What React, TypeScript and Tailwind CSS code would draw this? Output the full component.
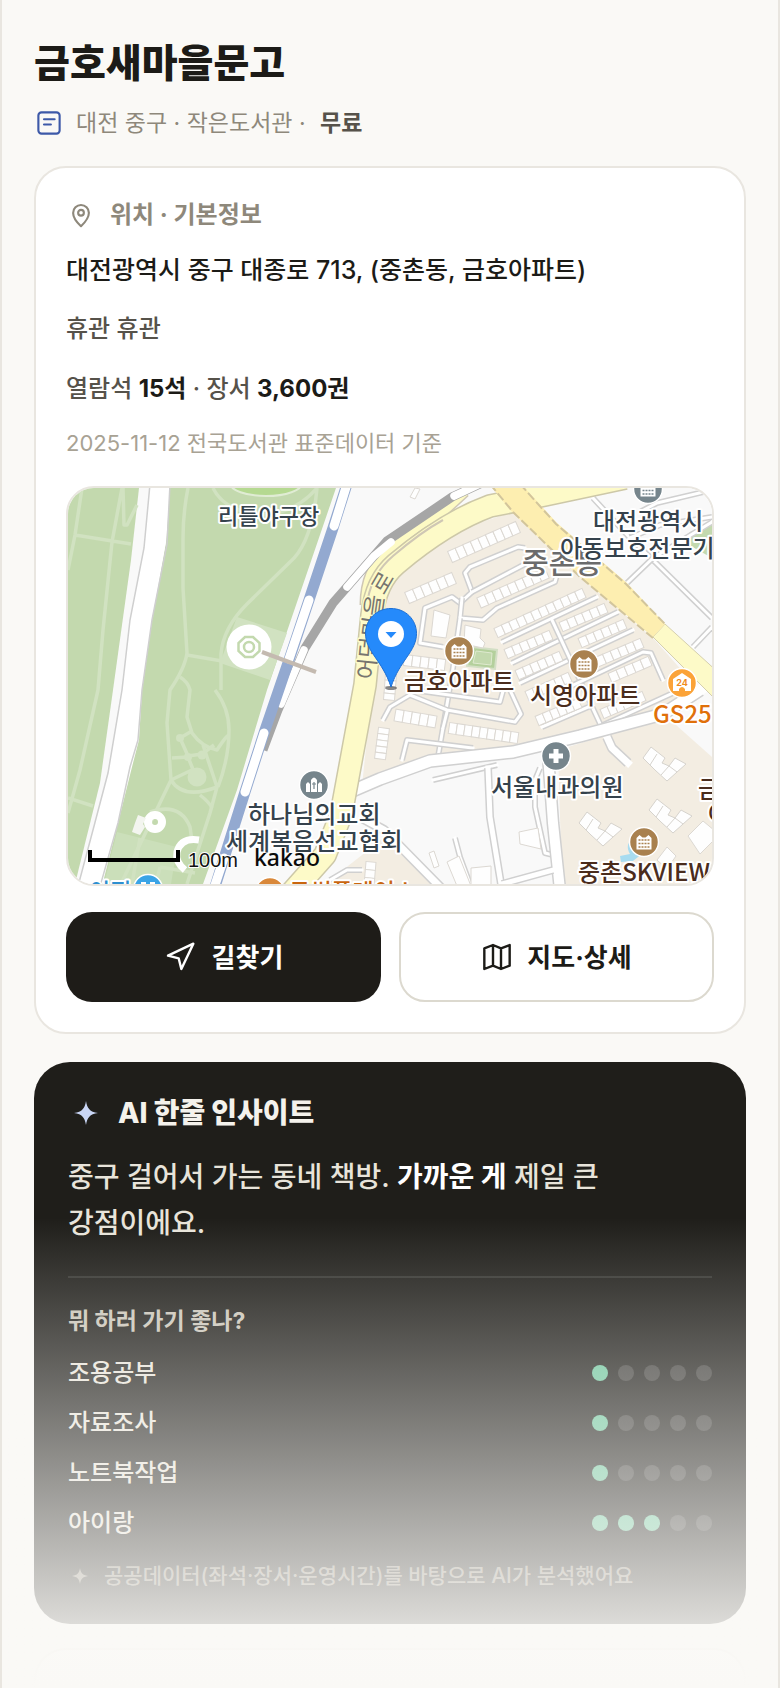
import type { ReactNode } from 'react';

const ratings = [
  { label: '조용공부', score: 1 },
  { label: '자료조사', score: 1 },
  { label: '노트북작업', score: 1 },
  { label: '아이랑', score: 3 },
];

const Sparkle = ({ className = '' }: { className?: string }) => (
  <svg viewBox="0 0 24 24" fill="currentColor" className={className} aria-hidden="true">
    <path d="M12 4c.9 5.1 2.400 7.100 8 8-5.600.9-7.100 2.900-8 8-.9-5.100-2.400-7.100-8-8 5.600-.9 7.100-2.900 8-8z" />
  </svg>
);

/* ---------- Map pieces ---------- */

const Road = ({ points, w = 3 }: { points: string; w?: number }) => (
  <g fill="none" strokeLinejoin="round">
    <polyline points={points} stroke="#d0d0d0" strokeWidth={w + 3} />
    <polyline points={points} stroke="#ffffff" strokeWidth={w} strokeLinecap="square" />
  </g>
);

type RowProps = { x1: number; y1: number; x2: number; y2: number; n: number; d?: number };

// A terrace of n equal blocks between two points
const Blocks = ({ x1, y1, x2, y2, n, d = 10 }: RowProps) => {
  const length = Math.hypot(x2 - x1, y2 - y1);
  const angle = (Math.atan2(y2 - y1, x2 - x1) * 180) / Math.PI;
  const step = length / n;
  return (
    <g transform={`translate(${x1} ${y1}) rotate(${angle})`} fill="#fefefe" stroke="#dcd8d2">
      {Array.from({ length: n }, (_, i) => (
        <rect key={i} x={i * step} y={-d / 2} width={step} height={d} />
      ))}
    </g>
  );
};

const blockRows: RowProps[] = [
  { x1: 450, y1: 557, x2: 518, y2: 527, n: 9, d: 12 },
  { x1: 407, y1: 598, x2: 454, y2: 578, n: 6, d: 12 },
  { x1: 479, y1: 603, x2: 547, y2: 573, n: 9, d: 11 },
  { x1: 496, y1: 633, x2: 584, y2: 593, n: 12 },
  { x1: 561, y1: 627, x2: 606, y2: 608, n: 6 },
  { x1: 506, y1: 654, x2: 551, y2: 635, n: 6 },
  { x1: 580, y1: 643, x2: 625, y2: 624, n: 6 },
  { x1: 517, y1: 675, x2: 561, y2: 656, n: 6 },
  { x1: 597, y1: 662, x2: 642, y2: 643, n: 6 },
  { x1: 527, y1: 696, x2: 570, y2: 677, n: 6 },
  { x1: 610, y1: 678, x2: 650, y2: 661, n: 5 },
  { x1: 395, y1: 715, x2: 436, y2: 722, n: 5, d: 12 },
  { x1: 449, y1: 728, x2: 518, y2: 738, n: 9, d: 11 },
  { x1: 537, y1: 721, x2: 580, y2: 703, n: 6 },
  { x1: 602, y1: 714, x2: 644, y2: 696, n: 6 },
  { x1: 404, y1: 660, x2: 445, y2: 665, n: 5, d: 11 },
  { x1: 384, y1: 728, x2: 380, y2: 759, n: 5, d: 11 },
  { x1: 391, y1: 674, x2: 389, y2: 700, n: 4, d: 11 },
  { x1: 371, y1: 862, x2: 369, y2: 886, n: 3, d: 10 },
];

const lanes = [
  '525,548 518,547 470,567 465,573 472,592 460,603 452,597 425,608 420,643 443,647',
  '472,592 527,563',
  '462,598 460,618 483,620 497,608 555,582 557,575',
  '460,618 452,675 438,757',
  '502,642 597,597',
  '512,663 618,612',
  '520,683 633,630',
  '552,620 602,728',
  '567,688 643,652 651,653 663,680',
  '383,720 390,707 410,695 447,710 515,722 521,714 510,690',
  '413,690 500,702 505,684',
  '447,712 443,728',
  '402,760 407,740 473,748',
  '542,727 593,705',
  '603,725 673,693',
  '433,780 497,765',
  '540,768 535,780 535,807 545,853 553,855',
  '455,838 460,857 470,884',
  '593,498 630,538 653,560 712,618',
  '627,583 653,558 712,522',
  '630,538 660,525 712,517',
  '640,512 657,503 712,490',
  '693,647 712,627',
  '330,880 347,870 362,870',
];

const Estate = ({ x, y }: { x: number; y: number }) => (
  <path
    transform={`translate(${x} ${y})`}
    d="M-21-6-13-17 1-6-2-1 5 2 11-6 22 0 3 17-9 6zM-14 1-7-10M-3 11 5 2 13 8"
    fill="#fefefe"
    stroke="#d6d3cd"
  />
);

const Badge = ({ x, y, color, children }: { x: number; y: number; color: string; children?: ReactNode }) => (
  <g transform={`translate(${x} ${y})`}>
    <circle r="14.500" fill={color} stroke="#fff" strokeWidth="1.500" />
    {children}
  </g>
);

const Apartment = ({ hole }: { hole: string }) => (
  <>
    <path d="M-7.500 7.500v-11.500l3-3 3 2.500h3l3-2.500 3 3v11.500z" fill="#fff" />
    <path
      d="M-5.500-2h2m1 0h2m1 0h2m1 0h2M-5.500 1.500h2m1 0h2m1 0h2m1 0h2M-5.500 5h2m1 0h2m1 0h2m1 0h2"
      stroke={hole}
      strokeWidth="1.500"
    />
  </>
);

const LocationMap = () => (
  <svg
    viewBox="68 488 644 396"
    preserveAspectRatio="xMidYMid slice"
    className="block size-full"
    role="img"
    aria-label="금호새마을문고 주변 지도"
  >
    <rect x="68" y="488" width="644" height="396" fill="#f9f9f9" />

    {/* Riverside park */}
    <path d="M68 488h71l-8 72-18 130-13 93-25 101H68z" fill="#c3d9ae" />
    <path d="M170 488h166L267 690l-30 100-34 94H100l18-61 12-56 8-27 4-50 10-70 14-78z" fill="#c3d9ae" />
    <path d="M237 617l50 16-17 47-50-17z" fill="#d1e2c1" />
    <path d="M117 832l60 15-6 37H104z" fill="#cbdfba" />
    <g fill="none" stroke="#d1e2c1" strokeWidth="3.500" strokeLinejoin="round">
      <path d="M82 488l-7 47-7 35M75 535l56 9M122 488l-10 54-9 88-5 60-18 80-12 43M123 488l1 37h3l10-20M68 798l25 8" />
      <path d="M188 488q-5 25-5 50v50l4 65q-2 15-17 37l-3 33 4 57-53 110" />
      <path d="M317 488q-5 55-27 74l-43 42q-24 24-26 50v36M213 488q12 25 54 27 32-5 50-27" />
      <path d="M187 655l35 6M180 677q8 5 10 13l-3 27 5 16q10 14 25 17 9-14 12-15M215 690q14 18 14 40 0 28-11 57M171 780q12 20 46 7M171 780l23-11M203 745l14 42-7 26-23 71" />
      <path d="M180 738l12-7M180 738l8 18 14-2 12-9M172 758l16-1M188 757l6 15M200 795q10 8 12 13M150 812q30-10 40 15l2 14" />
      <path d="M140 838l-8 46M160 867l35 6M160 867l-4 17" />
    </g>
    <g fill="#d1e2c1">
      <circle cx="197" cy="777" r="9.500" />
      <circle cx="180" cy="738" r="4" />
      <circle cx="202" cy="755" r="4.500" />
      <circle cx="188" cy="757" r="4" />
    </g>
    <ellipse cx="266" cy="483" rx="36" ry="13" fill="#b5d991" stroke="#e0ecd4" strokeWidth="2" />

    {/* Riverside road */}
    <path
      d="M150 488l-6 60-14 72-8 70-14 83-15 57-16 60h24l17-67 14-56 7-27 3-50 10-70 14-78 4-54z"
      fill="#fff"
    />
    <path d="M150 484l-6 64-14 72-8 70-14 83-15 57-16 60" fill="none" stroke="#cfcfcf" strokeWidth="1.500" />
    <path d="M170 484l-3 60-15 76-10 70-4 50-8 27-12 56-19 67" fill="none" stroke="#cfcfcf" strokeWidth="1.500" />

    {/* Monument and pavilion */}
    <circle cx="249" cy="647" r="22.500" fill="#fff" />
    <path d="M245 637h8l6.500 6v8l-6.500 6h-8l-6.500-6v-8z" fill="none" stroke="#c3d9ae" strokeWidth="2.500" />
    <circle cx="249" cy="647" r="5" fill="none" stroke="#c3d9ae" strokeWidth="2.500" />
    <circle cx="155" cy="822" r="7" fill="none" stroke="#fff" strokeWidth="8" />
    <path d="M138 815l8 3-3 6 2 3-5 8-8-3 3-9z" fill="#f3f5ef" />
    <path d="M199 840q-18-3-22 12-2 10 8 18" fill="none" stroke="#fff" strokeWidth="7" />

    {/* Apartment ground */}
    <path d="M372 690l10-95 15-25 53-38 63-20 67 65 73 61 40 45-24 32-76 20-80 16-83 9-50 20-18 6z" fill="#f3ede2" />
    <path d="M558 750l109-33 45 40v127H562z" fill="#f3ede2" />
    <path d="M325 884l46-36 12-10 50 46z" fill="#f3ede2" />
    <path d="M690 532l22-8v34l-30-17z" fill="#c3d9ae" />
    <path d="M472 647l25 3-2 19-28-3z" fill="#b4d09c" stroke="#d3dfc5" strokeWidth="2" />
    <path d="M476 651l16 2-1 12-18-2z" fill="#c3d9ae" stroke="#dfeacf" />

    {lanes.map((points) => (
      <Road key={points} points={points} />
    ))}
    <Road points="488,768 490,817 502,890" w={5} />
    <Road points="548,755 553,823 560,890" w={10} />
    <Road points="502,884 553,870" w={5} />
    <Road points="362,818 384,830 443,890" w={7} />
    <Road points="607,737 612,748 628,763" w={7} />
    <Road points="352,791 380,779 430,761 513,752 580,736 663,714 700,690" w={11} />
    {blockRows.map((row) => (
      <Blocks key={`${row.x1}-${row.y1}`} {...row} />
    ))}
    <g fill="#fefefe" stroke="#dcd8d2">
      <path d="M434 610l16 5-4 23-15-2zM465 625l16 4-1 9 5 5-2 5-19-4z" />
      <path d="M519 832l19-4 3 21-21-5zM447 862l12-6 12 30h-14zM471 868l20-2v20h-20zM429 853l5-2 5 15-5 2z" />
      <path d="M688 836l15-15 12 10v8l-15 15zM657 860l10-13 9 9-9 13zM415 488l5 1-5 10-5-2z" />
    </g>
    <Estate x={664} y={764} />
    <Estate x={670} y={816} />
    <Estate x={600} y={829} />
    <path d="M634 838q-10 6-4 16l-10 2 1 6 12-1 10-8z" fill="#a8dcf0" />

    {/* Yellow roads */}
    <g fill="none" strokeLinejoin="round">
      <path d="M365 605q0-35 22-53 32-29 54-38l24-22" stroke="#cfc7b4" strokeWidth="11" />
      <path d="M365 605q0-35 22-53 32-29 54-38l24-22" stroke="#fdfac4" strokeWidth="8" />
      <path d="M285 900l40-45 16-40 24-130 7-70q4-34 24-51 50-42 94-58l55-11 80-17" stroke="#cdc8a8" strokeWidth="24" />
      <path d="M285 900l40-45 16-40 24-130 7-70q4-34 24-51 50-42 94-58l55-11 80-17" stroke="#fdfac8" strokeWidth="21" />
      <path d="M368 598q5-25 25-42 28-24 50-36" stroke="#cfc7b4" strokeWidth="2" />
    </g>
    <path d="M653 637l12-13 55 50v30z" fill="#fdfac8" stroke="#d5cfae" />
    <path d="M489 484h32l36 39 70 60 38 41-12 13-73-60-67-64z" fill="#fdeeb0" />
    <path d="M520 484l36 40 70 60 39 40M490 484l23 28 67 65 73 61" fill="none" stroke="#d2c59c" strokeWidth="2" strokeDasharray="9 3" />

    {/* Railways */}
    <path d="M480 484l-28 13-65 44-40 46-14 16-28 45-27 62-15 40" fill="none" stroke="#a6a6a6" strokeWidth="9" />
    <g fill="none" stroke="#fff" strokeWidth="7.500" strokeLinecap="round">
      <path d="M482 483l-28 13M391 542l-17 14-27 31M304 650l-23 54" />
    </g>
    <path d="M347 484l-14 44-23 69-21 63-25 73-20 62-30 95" fill="none" stroke="#93a9d0" strokeWidth="11" />
    <g fill="none" stroke="#fff" strokeWidth="9" strokeLinecap="round">
      <path d="M347 484l-13 42M309 600l-20 59M264 733l-19 59M224 858l-12 36" />
    </g>
    <path d="M262 652l54 20" stroke="#c4bab0" strokeWidth="4" />

    {/* Street name follows the bend */}
    <path id="street" d="M374 680l5-50 4-28q5-19 30-44" fill="none" />
    <g className="font-['Noto_Sans_CJK_KR',sans-serif]" stroke="#fff" strokeWidth="4" strokeLinejoin="round" paintOrder="stroke" fontWeight="500">
      <text fill="#77756f" fontSize="23" stroke="#fdfac8" strokeWidth="3" fontWeight="400">
        <textPath href="#street">어덕마을로</textPath>
      </text>
      <text x="522" y="574" fontSize="29" fill="#6b6b6b">중촌동</text>
      <text x="218" y="524" fontSize="22" fill="#35424c">리틀야구장</text>
      <text x="593" y="530" fontSize="24" fill="#35424c">대전광역시</text>
      <text x="560" y="557" fontSize="24" fill="#35424c">아동보호전문기관</text>
      <text x="404" y="690" fontSize="24" fill="#4a2c1c">금호아파트</text>
      <text x="530" y="704" fontSize="24" fill="#4a2c1c">시영아파트</text>
      <text x="653" y="723" fontSize="24" fill="#e0700a">GS25</text>
      <text x="491" y="796" fontSize="24" fill="#35424c">서울내과의원</text>
      <text x="578" y="881" fontSize="24" fill="#4a2c1c">중촌SKVIEW</text>
      <text x="248" y="823" fontSize="24" fill="#35424c">하나님의교회</text>
      <text x="226" y="850" fontSize="24" fill="#35424c">세계복음선교협회</text>
      <text x="698" y="798" fontSize="24" fill="#4a2c1c">금호</text>
      <text x="708" y="823" fontSize="24" fill="#4a2c1c">아파트</text>
      <text x="89" y="900" fontSize="23" fill="#2d8fd0">이진</text>
      <text x="289" y="900" fontSize="23" fill="#c9660f">투썸플레이스</text>
    </g>

    <Badge x={648} y={489} color="#76858c">
      <Apartment hole="#76858c" />
    </Badge>
    <Badge x={459} y={651} color="#a9814f">
      <Apartment hole="#a9814f" />
    </Badge>
    <Badge x={584} y={664} color="#a9814f">
      <Apartment hole="#a9814f" />
    </Badge>
    <Badge x={644} y={842} color="#a9814f">
      <Apartment hole="#a9814f" />
    </Badge>
    <Badge x={682} y={683} color="#fba338">
      <path d="M-9-4l9-6 9 6v12h-6v-2q-3-4-6 0v2h-6z" fill="#fff" />
      <text y="3" textAnchor="middle" fontSize="9" fontWeight="700" fill="#f08c1e" className="font-['Inter',sans-serif]">
        24
      </text>
    </Badge>
    <Badge x={556} y={756} color="#76858c">
      <path d="M0-7V7M-7 0H7" stroke="#fff" strokeWidth="5" />
    </Badge>
    <Badge x={314} y={785} color="#76858c">
      <path d="M-8 7v-8l2-2 2 2v8zM4 7v-8l2-2 2 2v8zM-3 7v-12q3-5 6 0v12z" fill="#fff" />
      <path d="M0-3v7M-2-1h4" stroke="#76858c" strokeWidth="1.200" />
    </Badge>
    <Badge x={148} y={889} color="#3ba4e6">
      <path d="M-4-6V6M4-6V6M-7-6h5M2-6h5" stroke="#fff" strokeWidth="2" />
    </Badge>
    <Badge x={270} y={892} color="#d9883a" />

    {/* Scale and provider mark */}
    <path d="M90 850v10h88v-10" fill="none" stroke="#000" strokeWidth="4" />
    <text x="188" y="867" fontSize="20" fill="#111" stroke="#fff" strokeWidth="2" paintOrder="stroke" className="font-['Liberation_Sans',sans-serif]">
      100m
    </text>
    <text x="254" y="866" fontSize="23" fontWeight="500" fill="#0a0a0a" className="font-['Noto_Sans',sans-serif]">
      kakao
    </text>

    {/* Library pin */}
    <ellipse cx="391" cy="688" rx="6" ry="2" fill="#555" opacity=".7" />
    <path
      d="M391 608.500c-14.500 0-25.500 11-25.500 25 0 18 17 27 25.500 53.500 8.500-26.500 25.500-35.500 25.500-53.500 0-14-11-25-25.500-25z"
      fill="#258afb"
      stroke="#1a6fd6"
    />
    <circle cx="391" cy="634" r="13" fill="#fff" />
    <path d="M385.500 632h11l-5.500 6z" fill="#258afb" />
  </svg>
);

const LocationCard = () => (
  <section className="mt-7 rounded-[32px] border-2 border-[#e9e6e0] bg-white p-[30px]">
    <h2 className="flex h-[34px] items-center gap-[14px] text-[24px] leading-[34px] font-bold text-[#8e887b]">
      <svg viewBox="0 0 24 24" fill="none" stroke="currentColor" strokeWidth="1.700" strokeLinejoin="round" className="size-[30px]" aria-hidden="true">
        <path d="M12 21s-6.300-6-6.300-10.700a6.300 6.300 0 0 1 12.600 0C18.300 15 12 21 12 21z" />
        <circle cx="12" cy="10.200" r="2.300" />
      </svg>
      위치 · 기본정보
    </h2>
    <p className="mt-5 text-[25px] leading-9 font-medium text-[#1c1b17]">대전광역시 중구 대종로 713, (중촌동, 금호아파트)</p>
    <p className="mt-6 text-[24px] leading-[34px] font-medium text-[#56524a]">휴관 휴관</p>
    <p className="mt-[26px] text-[24px] leading-[34px] font-medium text-[#56524a]">
      열람석 <strong className="font-bold text-[#1c1b17]">15석</strong> · 장서{' '}
      <strong className="font-bold text-[#1c1b17]">3,600권</strong>
    </p>
    <p className="mt-[22px] text-[22px] leading-[30px] text-[#a8a294]">2025-11-12 전국도서관 표준데이터 기준</p>

    <div className="mt-7 h-[400px] overflow-hidden rounded-[28px] border-2 border-[#e9e6e0]">
      <LocationMap />
    </div>

    <div className="mt-[26px] grid grid-cols-2 gap-[18px] text-[26px] font-bold">
      <button type="button" className="flex h-[90px] items-center justify-center gap-4 rounded-[26px] bg-[#1e1c18] text-white">
        <svg viewBox="0 0 24 24" fill="none" stroke="currentColor" strokeWidth="1.800" strokeLinejoin="round" className="size-8" aria-hidden="true">
          <path d="M3 11 22 2l-9 19-2-8z" />
        </svg>
        길찾기
      </button>
      <button type="button" className="flex h-[90px] items-center justify-center gap-[14px] rounded-[26px] border-2 border-[#dcd9cf] bg-white text-[#1c1b17]">
        <svg viewBox="0 0 24 24" fill="none" stroke="currentColor" strokeWidth="1.800" strokeLinejoin="round" className="size-8" aria-hidden="true">
          <path d="M2.500 5.500 9 3l6 2.500L21.500 3v15.500L15 21l-6-2.500L2.500 21zM9 3v15.500M15 5.500V21" />
        </svg>
        지도·상세
      </button>
    </div>
  </section>
);

const InsightCard = () => (
  <section className="mt-7 rounded-[36px] bg-[#1f1e1a] p-[34px]">
    <h2 className="flex h-[34px] items-center gap-[14px] text-[28px] font-extrabold text-[#f4f2ec]">
      <Sparkle className="size-9 text-[#c9d6f5]" />
      AI 한줄 인사이트
    </h2>
    <p className="mt-6 text-[28px] leading-[46px] font-medium break-keep text-[#e8e4da]">
      중구 걸어서 가는 동네 책방. <strong className="font-bold text-white">가까운 게</strong> 제일 큰 강점이에요.
    </p>
    <hr className="mt-[30px] border-t-2 border-white/10" />
    <h3 className="mt-7 text-[23px] leading-[30px] font-bold text-[#c9c4b8]">뭐 하러 가기 좋나?</h3>
    <ul className="mt-[22px] flex flex-col gap-5">
      {ratings.map(({ label, score }) => (
        <li key={label} className="flex h-[30px] items-center justify-between text-[24px] font-medium text-[#e8e4da]">
          {label}
          <span className="flex gap-[10px]" role="img" aria-label={`5점 중 ${score}점`}>
            {[1, 2, 3, 4, 5].map((dot) => (
              <span key={dot} className={`size-4 rounded-full ${dot <= score ? 'bg-[#6fc59d]' : 'bg-white/15'}`} />
            ))}
          </span>
        </li>
      ))}
    </ul>
    <p className="mt-6 flex items-center gap-3 text-[21px] leading-7 font-medium text-[#8e887b]">
      <Sparkle className="size-6" />
      공공데이터(좌석·장서·운영시간)를 바탕으로 AI가 분석했어요
    </p>
  </section>
);

export default function App() {
  return (
    <main
      lang="ko"
      className="relative flex min-h-screen flex-col overflow-hidden border-x-2 border-[#e9e6e0] bg-[#faf9f6] px-8 pt-[38px] font-['Inter','Noto_Sans_CJK_KR',sans-serif]"
    >
      <h1 className="text-[39px] leading-[50px] font-extrabold text-[#1c1b17]">금호새마을문고</h1>
      <p className="mt-5 flex items-center gap-3 text-[23px] leading-[30px] text-[#8e887b]">
        <svg viewBox="0 0 24 24" fill="none" stroke="#3d59a8" strokeWidth="1.700" strokeLinecap="round" className="size-[30px]" aria-hidden="true">
          <rect x="3.500" y="3.500" width="17" height="17" rx="2.500" />
          <path d="M8 9h8.500M8 13.200h5.500" />
        </svg>
        <span>
          대전 중구 · 작은도서관 · <b className="ml-2 font-semibold text-[#56524a]">무료</b>
        </span>
      </p>

      <LocationCard />
      <InsightCard />

      {/* Next card peeks in under the fade */}
      <div className="mt-6 min-h-10 flex-1 rounded-t-[32px] border-2 border-b-0 border-[#e9e6e0] bg-white" />

      <div className="pointer-events-none absolute -inset-x-0.5 bottom-0 h-[470px] bg-linear-to-b from-[#faf9f6]/0 to-[#faf9f6]" />
    </main>
  );
}
